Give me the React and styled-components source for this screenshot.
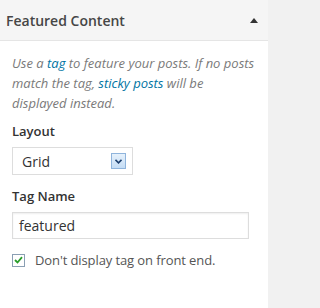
import styled, { createGlobalStyle } from 'styled-components';

const GlobalStyle = createGlobalStyle`
  html, body {
    margin: 0;
    padding: 0;
    background: #f1f1f1;
  }
  body {
    font-family: "Open Sans", "Liberation Sans", sans-serif;
    color: #444;
  }
`;

const Widget = styled.div`
  width: 268px;
  height: 308px;
  background: #f1f1f1;
`;

const Header = styled.div`
  height: 40px;
  background: #f5f5f5;
  border-bottom: 1px solid #e5e5e5;
  display: flex;
  align-items: center;
  justify-content: space-between;
  padding: 0 10px 0 6px;
`;

const Title = styled.h3`
  margin: 0;
  font-size: 14px;
  font-weight: 600;
  color: #464646;
`;

const Toggle = styled.span`
  width: 0;
  height: 0;
  border-left: 4px solid transparent;
  border-right: 4px solid transparent;
  border-bottom: 5px solid #333;
`;

const Body = styled.div`
  height: 257px;
  background: #fff;
  border-bottom: 1px solid #dedede;
  padding: 12px 12px 0 12px;
`;

const Description = styled.p`
  margin: 0 0 9px;
  font-size: 13px;
  line-height: 20px;
  font-style: italic;
  color: #7a7a7a;
  a {
    color: #0074a2;
    text-decoration: none;
  }
`;

const Label = styled.p`
  margin: 0 0 7px;
  font-size: 13px;
  font-weight: 600;
  color: #333;
  line-height: 18px;
`;

const Select = styled.div`
  width: 121px;
  height: 28px;
  box-sizing: border-box;
  border: 1px solid #ddd;
  display: flex;
  align-items: center;
  justify-content: space-between;
  padding: 0 6px 0 9px;
  margin-bottom: 12px;
  font-size: 14px;
  color: #333;
`;

const SelectArrow = styled.span`
  width: 15px;
  height: 16px;
  box-sizing: border-box;
  border: 1px solid #8fb4dc;
  background: linear-gradient(#e6f1fc, #c4dcf5);
  display: flex;
  align-items: center;
  justify-content: center;
`;

const TextInput = styled.div`
  width: 237px;
  height: 27px;
  box-sizing: border-box;
  border: 1px solid #ddd;
  box-shadow: inset 0 1px 2px rgba(0, 0, 0, 0.07);
  display: flex;
  align-items: center;
  padding: 0 6px;
  margin: 2px 0 12px;
  font-size: 14px;
  color: #333;
`;

const CheckRow = styled.label`
  display: flex;
  align-items: center;
  gap: 10px;
  font-size: 13px;
  letter-spacing: -0.1px;
  color: #555;
`;

const Box = styled.span`
  width: 13px;
  height: 13px;
  box-sizing: border-box;
  border: 1px solid #8a9fb3;
  background: #fff;
  display: flex;
  align-items: center;
  justify-content: center;
`;

export default function App() {
  return (
    <Widget>
      <GlobalStyle />
      <Header>
        <Title>Featured Content</Title>
        <Toggle />
      </Header>
      <Body>
        <Description>
          Use a <a href="#">tag</a> to feature your posts. If no posts match the tag,{' '}
          <a href="#">sticky posts</a> will be displayed instead.
        </Description>
        <Label>Layout</Label>
        <Select>
          Grid
          <SelectArrow>
            <svg width="7" height="5" viewBox="0 0 7 5">
              <path d="M0.5 0.8 L3.5 3.8 L6.5 0.8" fill="none" stroke="#1d3f6e" strokeWidth="1.6" />
            </svg>
          </SelectArrow>
        </Select>
        <Label>Tag Name</Label>
        <TextInput>featured</TextInput>
        <CheckRow>
          <Box>
            <svg width="9" height="8" viewBox="0 0 9 8">
              <path d="M1 4 L3.5 6.5 L8 1.2" fill="none" stroke="#2a9d2a" strokeWidth="1.8" />
            </svg>
          </Box>
          Don't display tag on front end.
        </CheckRow>
      </Body>
    </Widget>
  );
}
